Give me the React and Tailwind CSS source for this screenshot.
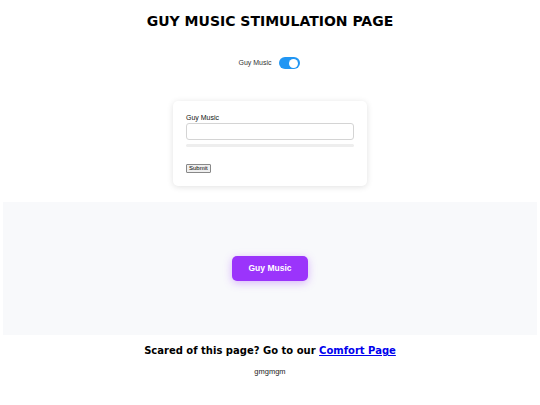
export default function App() {
  return (
    <div className="min-h-screen bg-white flex flex-col items-center font-['DejaVu_Sans',sans-serif] text-black">
      <h1 className="mt-[13px] text-[14px] leading-[16px] font-bold">GUY MUSIC STIMULATION PAGE</h1>

      {/* toggle */}
      <div className="mt-[28px] flex items-center gap-[7px] h-[12px] -translate-x-[1px]">
        <span className="font-['Liberation_Sans',Arial,sans-serif] text-[7px] text-[#333]">Guy Music</span>
        <div className="w-[21px] h-[12px] rounded-full bg-[#2196f3] flex items-center justify-end pr-[2px]">
          <div className="w-[9px] h-[9px] rounded-full bg-white" />
        </div>
      </div>

      {/* form card */}
      <div className="mt-[32px] w-[194px] rounded-[5px] bg-white shadow-[0_1px_6px_rgba(0,0,0,0.12)] px-[13px] pt-[12px] pb-[13px] font-['Liberation_Sans',Arial,sans-serif]">
        <label className="block text-[7px] leading-[9px] text-[#111]">Guy Music</label>
        <input className="mt-[1px] block w-full h-[17px] rounded-[3px] border border-[#d4d4d4] bg-white outline-none" />
        <div className="mt-[4px] h-[3px] rounded-full bg-[#eee]" />
        <button className="mt-[17px] block h-[9px] px-[2px] text-[6px] leading-[7px] border border-[#888] rounded-[1px] bg-[#efefef] text-black">Submit</button>
      </div>

      {/* action panel */}
      <div className="mt-[16px] self-stretch mx-[3px] h-[133px] bg-[#f8f9fb] flex items-center justify-center">
        <button className="w-[76px] h-[25px] rounded-[5px] bg-[#9b34fb] text-white text-[8.5px] font-bold font-['Liberation_Sans',Arial,sans-serif] shadow-[0_2px_8px_rgba(155,52,251,0.35)]">
          Guy Music
        </button>
      </div>

      <p className="mt-[10px] text-[10px] leading-[12px] font-bold">
        Scared of this page? Go to our <a href="#" className="text-[#0000ee] underline">Comfort Page</a>
      </p>
      <p className="mt-[10px] text-[7.5px] leading-[9px] font-['Liberation_Sans',Arial,sans-serif] text-[#222]">gmgmgm</p>
    </div>
  );
}
